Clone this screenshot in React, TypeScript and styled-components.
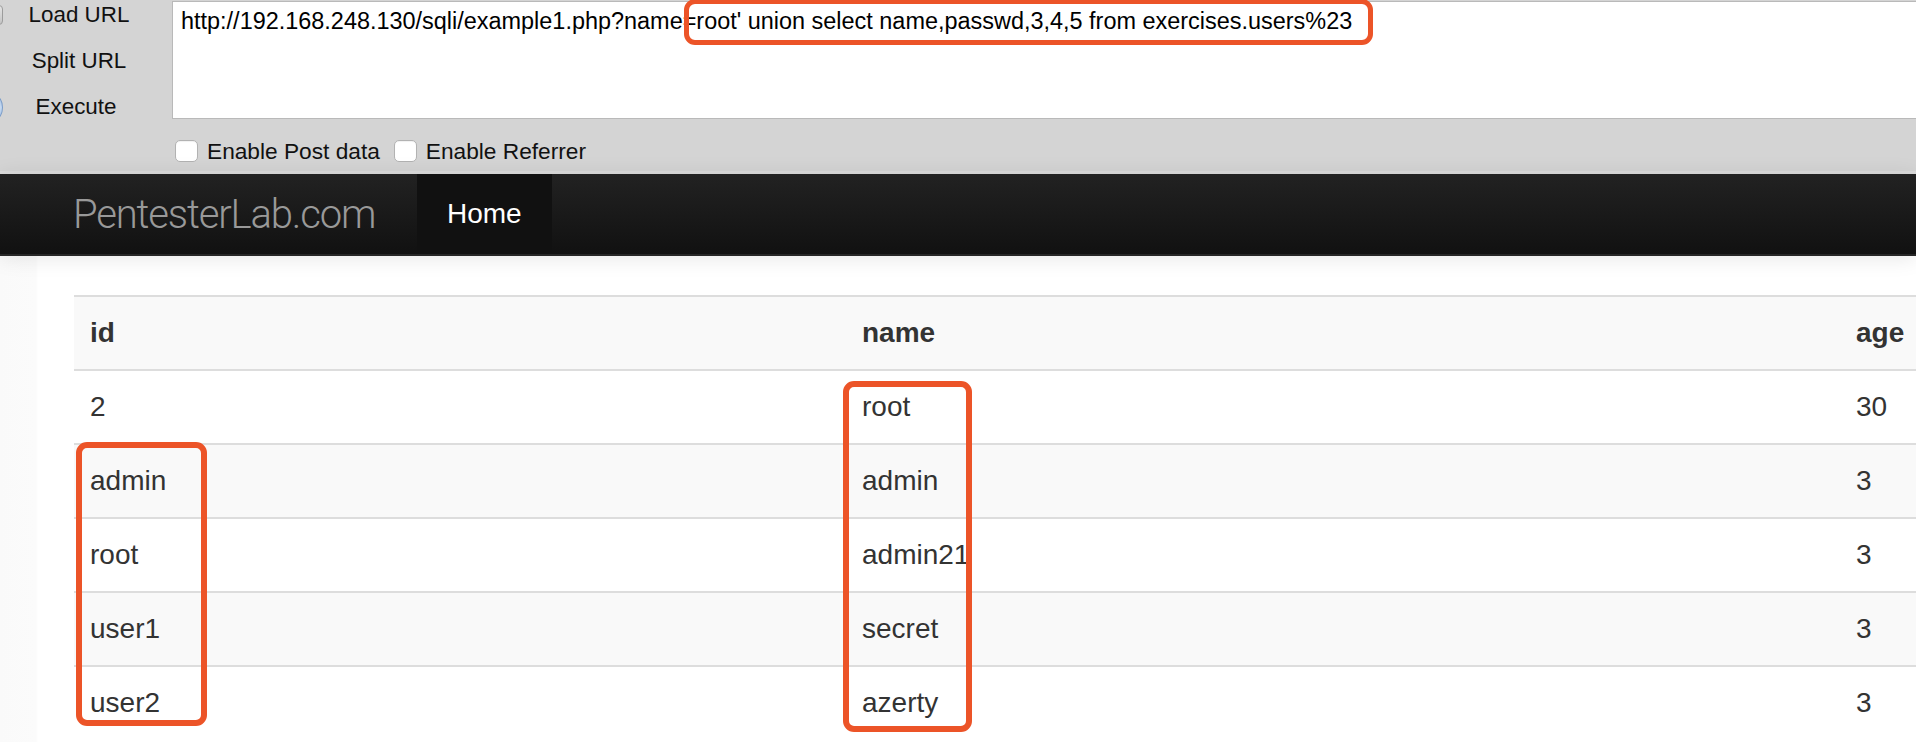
import React from "react";
import styled, { createGlobalStyle } from "styled-components";

const GlobalStyle = createGlobalStyle`
  html, body { margin: 0; padding: 0; background: #fff; overflow: hidden; }
  body { font-family: "Liberation Sans", Arial, Helvetica, sans-serif; }
  * { box-sizing: border-box; }
`;

const Page = styled.div`
  width: 1916px;
  height: 742px;
  overflow: hidden;
  display: flex;
  flex-direction: column;
`;

/* ---------- HackBar style toolbar ---------- */

const Toolbar = styled.div`
  flex-shrink: 0;
  display: flex;
  flex-direction: column;
  background: #d4d4d4;
  border-bottom: 3px solid #dcdcdc;
`;

const ToolbarTop = styled.div`
  position: relative;
  display: flex;
  height: 120px;
`;

const ButtonsColumn = styled.div`
  width: 172px;
  flex-shrink: 0;
  display: flex;
  flex-direction: column;
  gap: 16px;
`;

const ActionRow = styled.div`
  height: 30px;
  display: flex;
  align-items: center;
`;

const EdgeIcon = styled.span<{ $kind: "square" | "round" | "none" }>`
  flex-shrink: 0;
  width: 14px;
  height: ${(p) => (p.$kind === "round" ? "23px" : "20px")};
  margin-left: -11px;
  border-radius: ${(p) => (p.$kind === "round" ? "50%" : "4px")};
  background: ${(p) =>
    p.$kind === "square"
      ? "linear-gradient(#e4e4e4, #c4c4c4)"
      : p.$kind === "round"
      ? "radial-gradient(circle at 70% 50%, #cfe0f5, #8fb2dd)"
      : "transparent"};
  border: ${(p) =>
    p.$kind === "none" ? "none" : p.$kind === "round" ? "1px solid #7a9cc8" : "1px solid #9c9c9c"};
`;

const ActionLabel = styled.span<{ $nudge?: number }>`
  width: 152px;
  text-align: center;
  font-size: 22.4px;
  line-height: 30px;
  color: #111;
  margin-left: ${(p) => p.$nudge ?? 0}px;
`;

const UrlBox = styled.div`
  flex: 1;
  margin-top: 1px;
  height: 118px;
  background: #fff;
  border: 1px solid #b9b9b9;
  border-right: none;
  padding: 5px 0 0 8px;
`;

const UrlText = styled.div`
  font-size: 23.45px;
  line-height: 28px;
  color: #000;
  white-space: nowrap;
`;

const OptionsRow = styled.div`
  height: 51px;
  display: flex;
  align-items: flex-start;
  padding: 20px 0 0 175px;
  gap: 14px;
`;

const Option = styled.label`
  display: flex;
  align-items: center;
  gap: 9px;
  height: 22px;
`;

const CheckBox = styled.span`
  width: 23px;
  height: 22px;
  background: #fff;
  border: 1px solid #b2b2b2;
  border-radius: 5px;
  box-shadow: inset 0 1px 1px rgba(0, 0, 0, 0.06);
`;

const OptionText = styled.span`
  font-size: 22.7px;
  line-height: 22px;
  color: #111;
`;

/* ---------- Annotation boxes ---------- */

const Highlight = styled.div<{ $x: number; $y: number; $w: number; $h: number; $b?: number }>`
  position: absolute;
  left: ${(p) => p.$x}px;
  top: ${(p) => p.$y}px;
  width: ${(p) => p.$w}px;
  height: ${(p) => p.$h}px;
  border: ${(p) => p.$b ?? 6}px solid #ec5428;
  border-radius: 11px;
  pointer-events: none;
`;

/* ---------- Navbar ---------- */

const Navbar = styled.div`
  position: relative;
  z-index: 2;
  flex-shrink: 0;
  height: 82px;
  display: flex;
  align-items: stretch;
  padding-left: 73px;
  background: linear-gradient(#222222, #111111);
  border-bottom: 2px solid #262626;
  box-shadow: 0 2px 20px rgba(0, 0, 0, 0.1);
`;

const Brand = styled.div`
  width: 344px;
  display: flex;
  align-items: center;
  font-family: Roboto, "Liberation Sans", sans-serif;
  font-weight: 300;
  font-size: 40px;
  letter-spacing: -1.15px;
  color: #999;
`;

const NavItem = styled.div<{ $active?: boolean }>`
  display: flex;
  align-items: center;
  padding: 0 30px 0 30px;
  font-size: 28px;
  color: ${(p) => (p.$active ? "#fff" : "#999")};
  background: ${(p) => (p.$active ? "#111" : "transparent")};
`;

/* ---------- Content ---------- */

const Main = styled.div`
  flex: 1;
  padding: 39px 0 0 74px;
  background: linear-gradient(to right, #fafafa 0, #fbfbfb 36px, #fff 38px);
`;

const TableWrap = styled.div`
  position: relative;
  width: 1900px;
`;

const Table = styled.table`
  width: 1900px;
  table-layout: fixed;
  border-collapse: collapse;
  border-spacing: 0;
`;

const Row = styled.tr<{ $striped?: boolean }>`
  background: ${(p) => (p.$striped ? "#f9f9f9" : "#fff")};
`;

const HeadCell = styled.th`
  padding: 16px;
  line-height: 40px;
  font-size: 28px;
  font-weight: bold;
  color: #333;
  text-align: left;
  border-top: 2px solid #dddddd;
`;

const Cell = styled.td`
  padding: 16px;
  line-height: 40px;
  font-size: 28px;
  color: #333;
  text-align: left;
  vertical-align: top;
  border-top: 2px solid #dddddd;
`;

const rows = [
  { id: "2", name: "root", age: "30" },
  { id: "admin", name: "admin", age: "3" },
  { id: "root", name: "admin21", age: "3" },
  { id: "user1", name: "secret", age: "3" },
  { id: "user2", name: "azerty", age: "3" },
];

export default function App() {
  return (
    <Page>
      <GlobalStyle />
      <Toolbar>
        <ToolbarTop>
          <ButtonsColumn>
            <ActionRow>
              <EdgeIcon $kind="square" />
              <ActionLabel>Load URL</ActionLabel>
            </ActionRow>
            <ActionRow>
              <EdgeIcon $kind="none" />
              <ActionLabel>Split URL</ActionLabel>
            </ActionRow>
            <ActionRow>
              <EdgeIcon $kind="round" />
              <ActionLabel $nudge={-3}>Execute</ActionLabel>
            </ActionRow>
          </ButtonsColumn>
          <UrlBox>
            <UrlText>
              http://192.168.248.130/sqli/example1.php?name=root' union select name,passwd,3,4,5 from exercises.users%23
            </UrlText>
          </UrlBox>
          <Highlight $x={684} $y={-1} $w={689} $h={46} $b={5} />
        </ToolbarTop>
        <OptionsRow>
          <Option>
            <CheckBox />
            <OptionText>Enable Post data</OptionText>
          </Option>
          <Option>
            <CheckBox />
            <OptionText>Enable Referrer</OptionText>
          </Option>
        </OptionsRow>
      </Toolbar>

      <Navbar>
        <Brand>PentesterLab.com</Brand>
        <NavItem $active>Home</NavItem>
      </Navbar>

      <Main>
        <TableWrap>
          <Table>
            <colgroup>
              <col style={{ width: 772 }} />
              <col style={{ width: 994 }} />
              <col />
            </colgroup>
            <thead>
              <Row $striped>
                <HeadCell>id</HeadCell>
                <HeadCell>name</HeadCell>
                <HeadCell>age</HeadCell>
              </Row>
            </thead>
            <tbody>
              {rows.map((r, i) => (
                <Row key={i} $striped={i % 2 === 1}>
                  <Cell>{r.id}</Cell>
                  <Cell>{r.name}</Cell>
                  <Cell>{r.age}</Cell>
                </Row>
              ))}
            </tbody>
          </Table>
          <Highlight $x={2} $y={147} $w={131} $h={284} />
          <Highlight $x={769} $y={86} $w={129} $h={351} />
        </TableWrap>
      </Main>
    </Page>
  );
}
